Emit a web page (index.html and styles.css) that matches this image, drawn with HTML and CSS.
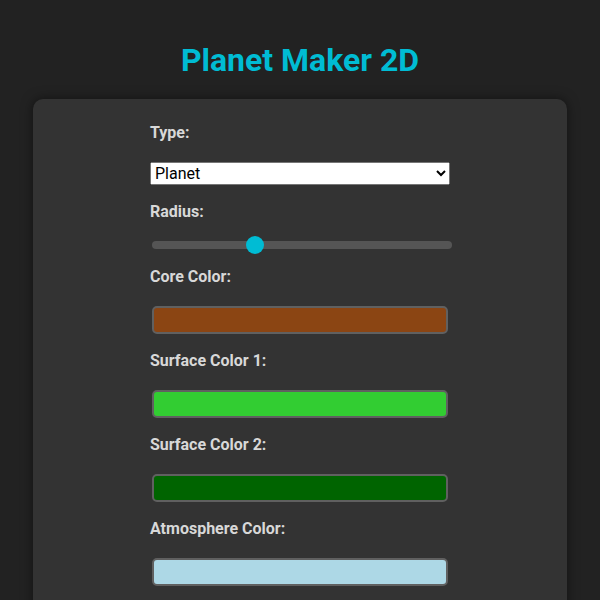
FILE: index.html
```html
<!DOCTYPE html>
<html>
<head>
<meta charset="utf-8">
<title>Planet Maker 2D</title>
<link rel="stylesheet" href="styles.css">
</head>
<body>
<h1 class="title">Planet Maker 2D</h1>
<div class="card">
  <div class="controls">
    <div class="field">
      <label class="label" for="type">Type:</label>
      <select id="type" class="select">
        <option>Planet</option>
        <option>Star</option>
        <option>Moon</option>
      </select>
    </div>
    <div class="field">
      <label class="label" for="radius">Radius:</label>
      <input id="radius" class="range" type="range" min="10" max="100" value="40">
    </div>
    <div class="field">
      <label class="label" for="core">Core Color:</label>
      <input id="core" class="color" type="color" value="#8b4513">
    </div>
    <div class="field">
      <label class="label" for="s1">Surface Color 1:</label>
      <input id="s1" class="color" type="color" value="#32cd32">
    </div>
    <div class="field">
      <label class="label" for="s2">Surface Color 2:</label>
      <input id="s2" class="color" type="color" value="#006400">
    </div>
    <div class="field">
      <label class="label" for="atm">Atmosphere Color:</label>
      <input id="atm" class="color" type="color" value="#add8e6">
    </div>
  </div>
</div>
</body>
</html>
```
FILE: styles.css
```css
html, body {
  margin: 0;
  padding: 0;
}
body {
  background: #222222;
  font-family: Roboto, "Liberation Sans", sans-serif;
  color: #dddddd;
  padding: 20px;
}
.title {
  margin: 21px 0 20px;
  text-align: center;
  font-size: 32px;
  font-weight: 700;
  color: #00bcd4;
  line-height: normal;
}
.card {
  box-sizing: border-box;
  width: 534px;
  margin: 0 auto;
  background: #333333;
  border-radius: 10px;
  box-shadow: 0 0 12px rgba(0, 0, 0, 0.5);
  padding: 24px 0 40px;
}
.controls {
  width: 300px;
  margin: 0 auto;
}
.field {
  display: flex;
  flex-direction: column;
  align-items: flex-start;
  margin-bottom: 17px;
}
.label {
  display: block;
  font-size: 16px;
  font-weight: 700;
  line-height: 19px;
  color: #d8d8d8;
  margin: 0 0 20px;
}
.select {
  display: block;
  align-self: stretch;
  font-family: Roboto, "Liberation Sans", sans-serif;
  font-size: 16px;
  margin: 0;
}
.range {
  -webkit-appearance: none;
  appearance: none;
  display: block;
  width: 300px;
  height: 8px;
  margin: 0 0 1px 2px;
  background: #555555;
  border-radius: 4px;
  outline: none;
}
.range::-webkit-slider-thumb {
  -webkit-appearance: none;
  appearance: none;
  width: 18px;
  height: 18px;
  border-radius: 50%;
  background: #00bcd4;
  border: none;
  cursor: pointer;
}
.color {
  -webkit-appearance: none;
  appearance: none;
  display: block;
  box-sizing: border-box;
  width: 296px;
  height: 28px;
  margin: 0 0 0 2px;
  padding: 0;
  border: none;
  background: none;
  cursor: pointer;
}
.color::-webkit-color-swatch-wrapper {
  padding: 0;
}
.color::-webkit-color-swatch {
  border: 2px solid #606060;
  border-radius: 5px;
}
```
